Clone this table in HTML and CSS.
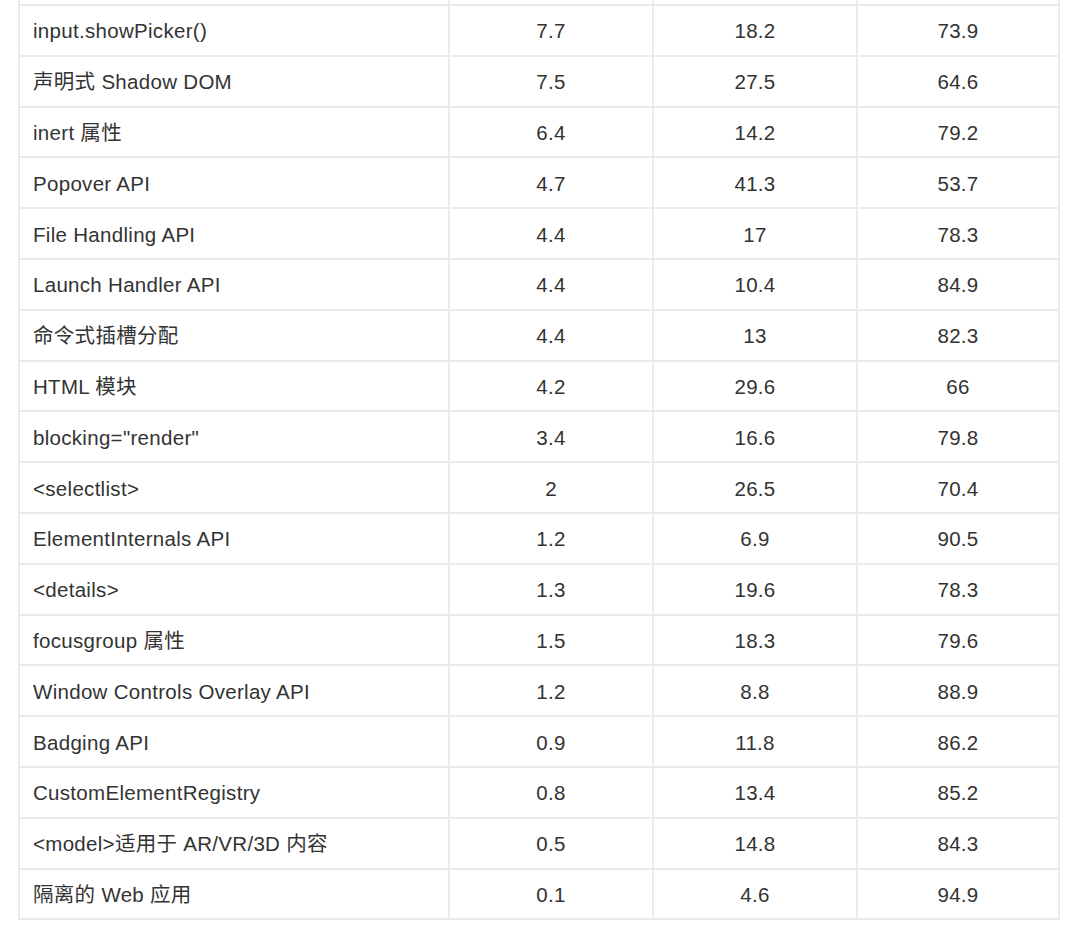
FILE: index.html
```html
<!DOCTYPE html>
<html lang="zh-CN">
<head>
<meta charset="utf-8">
<link rel="stylesheet" href="styles.css">
</head>
<body>
<table class="data">
  <colgroup>
    <col class="c-name"><col class="c-num"><col class="c-num"><col class="c-last">
  </colgroup>
  <tbody>
    <tr class="spacer"><td></td><td></td><td></td><td></td></tr>
    <tr><td>input.showPicker()</td><td>7.7</td><td>18.2</td><td>73.9</td></tr>
    <tr><td>声明式 Shadow DOM</td><td>7.5</td><td>27.5</td><td>64.6</td></tr>
    <tr><td>inert 属性</td><td>6.4</td><td>14.2</td><td>79.2</td></tr>
    <tr><td>Popover API</td><td>4.7</td><td>41.3</td><td>53.7</td></tr>
    <tr><td>File Handling API</td><td>4.4</td><td>17</td><td>78.3</td></tr>
    <tr><td>Launch Handler API</td><td>4.4</td><td>10.4</td><td>84.9</td></tr>
    <tr><td>命令式插槽分配</td><td>4.4</td><td>13</td><td>82.3</td></tr>
    <tr><td>HTML 模块</td><td>4.2</td><td>29.6</td><td>66</td></tr>
    <tr><td>blocking="render"</td><td>3.4</td><td>16.6</td><td>79.8</td></tr>
    <tr><td>&lt;selectlist&gt;</td><td>2</td><td>26.5</td><td>70.4</td></tr>
    <tr><td>ElementInternals API</td><td>1.2</td><td>6.9</td><td>90.5</td></tr>
    <tr><td>&lt;details&gt;</td><td>1.3</td><td>19.6</td><td>78.3</td></tr>
    <tr><td>focusgroup 属性</td><td>1.5</td><td>18.3</td><td>79.6</td></tr>
    <tr><td>Window Controls Overlay API</td><td>1.2</td><td>8.8</td><td>88.9</td></tr>
    <tr><td>Badging API</td><td>0.9</td><td>11.8</td><td>86.2</td></tr>
    <tr><td>CustomElementRegistry</td><td>0.8</td><td>13.4</td><td>85.2</td></tr>
    <tr><td>&lt;model&gt;适用于 AR/VR/3D 内容</td><td>0.5</td><td>14.8</td><td>84.3</td></tr>
    <tr><td>隔离的 Web 应用</td><td>0.1</td><td>4.6</td><td>94.9</td></tr>
  </tbody>
</table>
</body>
</html>
```
FILE: styles.css
```css
html, body {
  margin: 0;
  padding: 0;
  background: #ffffff;
}

body {
  padding: 0 0 0 18px;
  font-family: "Liberation Sans", "Noto Sans CJK SC", sans-serif;
  color: #333333;
}

.data {
  width: 1040px;
  border-collapse: collapse;
  table-layout: fixed;
  font-size: 20.5px;
  letter-spacing: 0.3px;
}

.c-name { width: 430px; }
.c-num { width: 204px; }
.c-last { width: 202px; }

.data td {
  border: 2px solid #ebebeb;
  height: 50.8px;
  padding: 2px 13px 0;
  box-sizing: border-box;
  text-align: center;
  vertical-align: middle;
  white-space: nowrap;
  line-height: 24px;
}

.data td:first-child {
  text-align: left;
}

.data .spacer td {
  height: 5px;
  border-top: none;
  padding: 0;
}
```
